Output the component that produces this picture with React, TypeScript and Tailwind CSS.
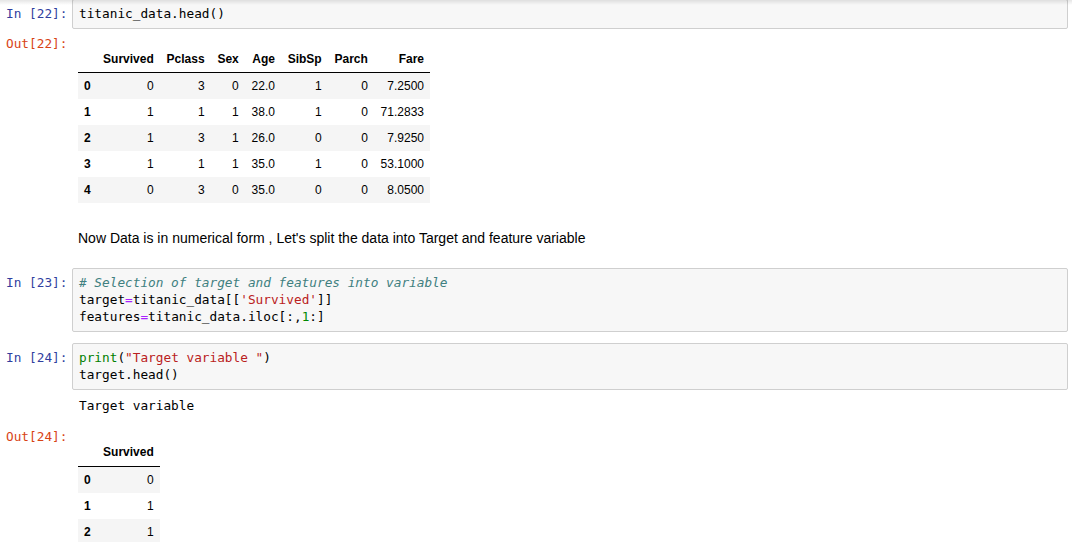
import React from "react";

const mono = "font-['DejaVu_Sans_Mono','Liberation_Mono',monospace] text-[12.75px] leading-[17px]";

interface Row {
  idx: number;
  vals: string[];
}

const headCols = ["Survived", "Pclass", "Sex", "Age", "SibSp", "Parch", "Fare"];
const headRows: Row[] = [
  { idx: 0, vals: ["0", "3", "0", "22.0", "1", "0", "7.2500"] },
  { idx: 1, vals: ["1", "1", "1", "38.0", "1", "0", "71.2833"] },
  { idx: 2, vals: ["1", "3", "1", "26.0", "0", "0", "7.9250"] },
  { idx: 3, vals: ["1", "1", "1", "35.0", "1", "0", "53.1000"] },
  { idx: 4, vals: ["0", "3", "0", "35.0", "0", "0", "8.0500"] },
];

const targetRows: Row[] = [
  { idx: 0, vals: ["0"] },
  { idx: 1, vals: ["1"] },
  { idx: 2, vals: ["1"] },
];

function Prompt({ label, out }: { label: string; out?: boolean }) {
  return (
    <div className={`w-[72px] shrink-0 pl-[6px] ${mono} ${out ? "text-[#d84315]" : "text-[#303f9f]"}`}>
      {label}
    </div>
  );
}

function InputCell({ n, children, className = "" }: { n: number; children: React.ReactNode; className?: string }) {
  return (
    <div className={`flex pr-[4px] ${className}`}>
      <div className="pt-[6px]">
        <Prompt label={`In [${n}]:`} />
      </div>
      <div className={`flex-1 border border-[#cfcfcf] rounded-[2px] bg-[#f7f7f7] pl-[6px] pt-[5px] pb-[6px] text-black ${mono}`}>
        {children}
      </div>
    </div>
  );
}

function DataTable({ cols, rows }: { cols: string[]; rows: Row[] }) {
  return (
    <table className="border-collapse font-['Liberation_Sans',Arial,sans-serif] text-[12px] leading-[14px] text-black">
      <thead>
        <tr className="border-b border-black">
          <th className="px-[6px] py-[6px]"></th>
          {cols.map((c) => (
            <th key={c} className="px-[6.4px] py-[6px] text-right font-bold">
              {c}
            </th>
          ))}
        </tr>
      </thead>
      <tbody>
        {rows.map((r, i) => (
          <tr key={r.idx} className={i % 2 === 0 ? "bg-[#f5f5f5]" : "bg-white"}>
            <th className="px-[6px] py-[6px] text-left font-bold">{r.idx}</th>
            {r.vals.map((v, j) => (
              <td key={j} className="px-[6.4px] py-[6px] text-right">
                {v}
              </td>
            ))}
          </tr>
        ))}
      </tbody>
    </table>
  );
}

export default function App() {
  return (
    <div className="relative w-[1072px] h-[542px] overflow-hidden bg-white">
      {/* toolbar shadow at the very top */}
      <div className="absolute top-0 left-0 right-0 h-[5px] bg-linear-to-b from-black/10 to-transparent pointer-events-none"></div>

      <InputCell n={22} className="mt-[-1px]">
        <div>titanic_data.head()</div>
      </InputCell>

      {/* Out[22] */}
      <div className="flex pt-[6px]">
        <Prompt label="Out[22]:" out />
        <div className="pt-[11px] pl-[6px]">
          <DataTable cols={headCols} rows={headRows} />
        </div>
      </div>

      {/* markdown */}
      <div className="flex mt-[25px]">
        <div className="w-[78px] shrink-0"></div>
        <p className="font-['Liberation_Sans',Arial,sans-serif] text-[14px] leading-[20px] text-black">
          Now Data is in numerical form , Let's split the data into Target and feature variable
        </p>
      </div>

      <InputCell n={23} className="mt-[20px]">
        <div className="italic text-[#408080]"># Selection of target and features into variable</div>
        <div>
          target<span className="text-[#aa22ff]">=</span>titanic_data[[<span className="text-[#ba2121]">'Survived'</span>]]
        </div>
        <div>
          features<span className="text-[#aa22ff]">=</span>titanic_data.iloc[:,<span className="text-[#008800]">1</span>:]
        </div>
      </InputCell>

      <InputCell n={24} className="mt-[11px]">
        <div>
          <span className="text-[#008000]">print</span>(<span className="text-[#ba2121]">"Target variable "</span>)
        </div>
        <div>target.head()</div>
      </InputCell>

      {/* stream output */}
      <div className="flex pt-[7px]">
        <div className="w-[72px] shrink-0"></div>
        <div className={`pl-[7px] text-black ${mono}`}>Target variable</div>
      </div>

      {/* Out[24] */}
      <div className="flex pt-[14px]">
        <Prompt label="Out[24]:" out />
        <div className="pt-[11px] pl-[6px]">
          <table className="border-collapse font-['Liberation_Sans',Arial,sans-serif] text-[12px] leading-[14px] text-black">
            <thead>
              <tr className="border-b border-black">
                <th className="px-[6px] pt-[6px] pb-[7px]"></th>
                <th className="px-[6.4px] pt-[6px] pb-[7px] text-right font-bold">Survived</th>
              </tr>
            </thead>
            <tbody>
              {targetRows.map((r, i) => (
                <tr key={r.idx} className={i % 2 === 0 ? "bg-[#f5f5f5]" : "bg-white"}>
                  <th className="px-[6px] py-[6px] text-left font-bold">{r.idx}</th>
                  <td className="px-[6.4px] py-[6px] text-right">{r.vals[0]}</td>
                </tr>
              ))}
            </tbody>
          </table>
        </div>
      </div>
    </div>
  );
}
